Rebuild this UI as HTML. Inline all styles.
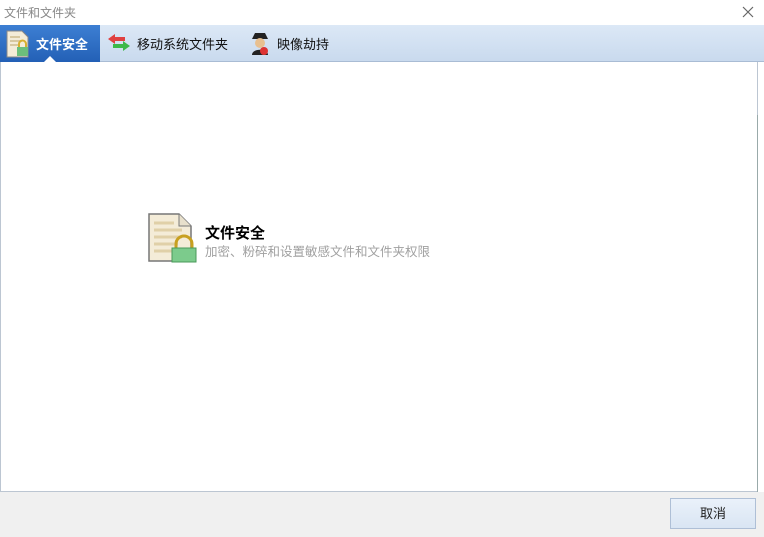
<!DOCTYPE html>
<html><head><meta charset="utf-8"><style>
*{margin:0;padding:0;box-sizing:border-box}
body{width:764px;height:537px;overflow:hidden;background:#fff;font-family:"Liberation Sans","Noto Sans CJK SC",sans-serif;position:relative}
.t{position:absolute;left:4px;top:4px;font-size:12px;color:#888}
.bar{position:absolute;left:0;top:25px;width:764px;height:37px;background:linear-gradient(#dce8f6,#c9daee);border-bottom:1px solid #a9bcd4}
.act{position:absolute;left:0;top:25px;width:100px;height:37px;background:linear-gradient(#3d7fd3,#2360b6)}
.tab{position:absolute;top:34px;font-size:13px;color:#111}
.cont{position:absolute;left:0;top:62px;width:758px;height:430px;border:1px solid #bcc6d2;border-top:none;background:#fff}
.foot{position:absolute;left:0;top:492px;width:764px;height:45px;background:#f0f0f0}
.btn{position:absolute;left:670px;top:498px;width:86px;height:31px;border:1px solid #aebfd6;background:linear-gradient(#eaf1fa,#d9e5f3);font-size:13px;text-align:center;line-height:29px;color:#222}
</style></head><body>
<div class="t">文件和文件夹</div>
<svg style="position:absolute;left:742px;top:6px" width="12" height="12"><path d="M1 1L11 11M11 1L1 11" stroke="#666" stroke-width="1.2"/></svg>
<div class="bar"></div>
<div class="act"></div>
<svg style="position:absolute;left:5px;top:30px" width="26" height="28"><path d="M2 1h15l6 6v20H2z" fill="#f4ecd8" stroke="#888"/><path d="M5 7h10M5 11h12M5 15h8" stroke="#d8c8a0" stroke-width="2"/><rect x="12" y="17" width="11" height="9" fill="#6cbf7c"/><path d="M14 17v-3a3.5 3.5 0 0 1 7 0v3" fill="none" stroke="#d8b030" stroke-width="2"/></svg>
<div class="tab" style="left:36px;color:#fff;font-weight:bold">文件安全</div>
<div style="position:absolute;left:44px;top:56px;width:0;height:0;border:6px solid transparent;border-bottom-color:#fff;border-top:none"></div>
<svg style="position:absolute;left:106px;top:32px" width="26" height="22"><path d="M2 7l7-5v3h10v4H9v3z" fill="#e04040"/><path d="M24 14l-7-5v3H7v4h10v3z" fill="#3cb84a"/></svg>
<div class="tab" style="left:137px">移动系统文件夹</div>
<svg style="position:absolute;left:249px;top:30px" width="22" height="26"><path d="M3 9h16l-3-6H6z" fill="#222"/><circle cx="11" cy="13" r="5" fill="#e8c090"/><path d="M3 25c0-7 16-7 16 0z" fill="#222"/><circle cx="15" cy="21" r="4" fill="#d33"/></svg>
<div class="tab" style="left:277px">映像劫持</div>
<div class="cont"></div>
<div style="position:absolute;left:757px;top:115px;width:1px;height:377px;background:#9aa"></div>
<svg style="position:absolute;left:147px;top:213px" width="50" height="50"><path d="M2 1h30l12 12v35H2z" fill="#f4ecd8" stroke="#777" stroke-width="1.5"/><path d="M32 1v12h12" fill="#e8e0cc" stroke="#777"/><path d="M7 10h20M7 17h28M7 24h28M7 31h24M7 38h22" stroke="#e0d0a8" stroke-width="3"/><path d="M29 36v-5a8 8 0 0 1 16 0v5" fill="none" stroke="#c8a020" stroke-width="3"/><rect x="25" y="35" width="24" height="14" fill="#7ccb8c" stroke="#4a9a5a"/></svg>
<div style="position:absolute;left:205px;top:222px;font-size:15px;font-weight:bold;color:#000">文件安全</div>
<div style="position:absolute;left:205px;top:241px;font-size:12.5px;color:#a0a0a0">加密、粉碎和设置敏感文件和文件夹权限</div>
<div class="foot"></div>
<div class="btn">取消</div>
</body></html>
